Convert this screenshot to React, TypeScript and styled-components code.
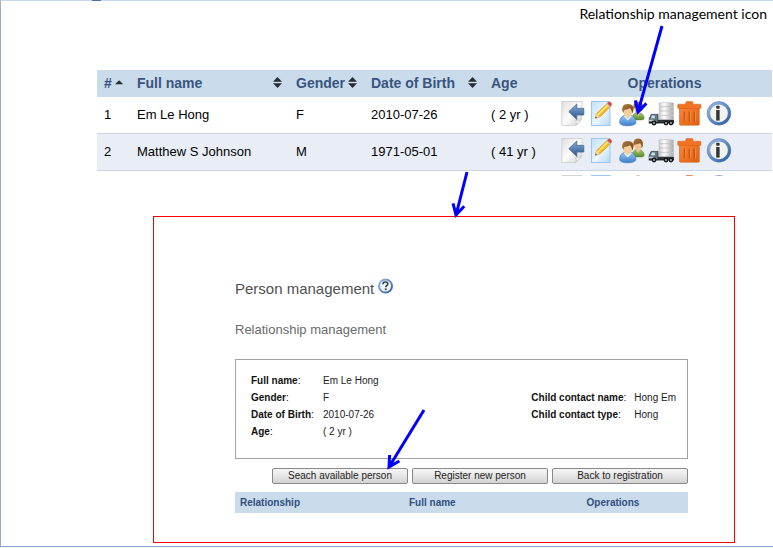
import React from "react";
import styled, { createGlobalStyle } from "styled-components";

const GlobalStyle = createGlobalStyle`
  *, *::before, *::after { box-sizing: border-box; }
  body {
    margin: 0;
    background: #fff;
    color: #000;
    font-family: "Liberation Sans", Arial, sans-serif;
  }
`;

const Page = styled.main`
  position: relative;
  border-top: 1px solid #c5d7ee;
  border-left: 1px solid #a3aab9;
  border-bottom: 1px solid #8ba3c4;
  padding-bottom: 3px;
`;

const TabEdge = styled.div`
  position: absolute;
  top: -1px;
  left: 91px;
  width: 9px;
  height: 1px;
  background: #4a73ab;
`;

const Caption = styled.p`
  margin: 0;
  padding: 3px 6px 0 0;
  text-align: right;
  font-family: Lato, "Open Sans", sans-serif;
  font-size: 14px;
  line-height: 20px;
`;

const ListClip = styled.section`
  margin: 46px 1px 0 96px;
  max-height: 106px;
  overflow: hidden;
`;

const PersonTable = styled.table`
  width: 100%;
  border-collapse: separate;
  border-spacing: 0;
  table-layout: fixed;
`;

const Col = styled.col<{ $w?: number }>`
  width: ${({ $w }) => ($w ? `${$w}px` : "auto")};
`;

const HeadCell = styled.th<{ $center?: boolean }>`
  height: 27px;
  padding: 0 4px 2px 7px;
  background: #cadceb;
  color: #39547f;
  font-size: 14px;
  line-height: 20px;
  text-align: ${({ $center }) => ($center ? "center" : "left")};
  white-space: nowrap;
`;

const SortButton = styled.button<{ $tight?: boolean }>`
  display: flex;
  align-items: center;
  justify-content: ${({ $tight }) => ($tight ? "flex-start" : "space-between")};
  gap: ${({ $tight }) => ($tight ? "3px" : "0")};
  width: 100%;
  padding: 0 3px 0 0;
  border: 0;
  background: none;
  color: inherit;
  font: inherit;
  cursor: pointer;
`;

const Row = styled.tr<{ $alt?: boolean }>`
  background: ${({ $alt }) => ($alt ? "#e9eef6" : "#fff")};
`;

const Cell = styled.td`
  height: 37px;
  padding: 0 0 0 7px;
  border-bottom: 1px solid #c9d3e6;
  font-size: 13px;
  line-height: 16px;
  white-space: nowrap;
`;

const Operations = styled.div`
  display: flex;
  gap: 5px;
  margin-top: -4px;
`;

const IconButton = styled.button`
  width: 24px;
  height: 24px;
  padding: 0;
  border: 0;
  background: none;
  cursor: pointer;

  svg {
    display: block;
    overflow: visible;
  }
`;

const Frame = styled.section`
  position: relative;
  margin: 40px 38px 0 152px;
  padding: 61px 46px 29px 81px;
  border: 1px solid #f00;
`;

const Title = styled.h1`
  display: flex;
  align-items: center;
  gap: 4px;
  margin: 0;
  color: #505050;
  font-size: 15px;
  font-weight: 400;
  line-height: 20px;

  svg {
    display: block;
    margin-bottom: 5px;
  }
`;

const Subtitle = styled.h2`
  margin: 21px 0 0;
  color: #6a6a6a;
  font-size: 13px;
  font-weight: 400;
  line-height: 20px;
`;

const Details = styled.div`
  display: flex;
  justify-content: space-between;
  align-items: flex-start;
  margin-top: 19px;
  padding: 12px 11px 18px 15px;
  border: 1px solid #a2a2a2;
  color: #222;
  font-size: 10px;
  line-height: 17px;
`;

const Facts = styled.dl<{ $label: number; $lower?: boolean }>`
  display: grid;
  grid-template-columns: ${({ $label }) => $label}px auto;
  margin: ${({ $lower }) => ($lower ? "17px" : "0")} 0 0;
`;

const Label = styled.dt`
  color: #111;
`;

const Value = styled.dd`
  margin: 0;
`;

const Actions = styled.div`
  display: flex;
  justify-content: flex-end;
  gap: 4px;
  margin-top: 9px;
`;

const ActionButton = styled.button`
  width: 136px;
  height: 16px;
  padding: 0;
  border: 1px solid #888;
  border-radius: 2px;
  background: linear-gradient(#f6f6f6, #e6e6e6 50%, #d2d2d2);
  color: #222;
  font-family: inherit;
  font-size: 10px;
  line-height: 14px;
  cursor: pointer;
`;

const RelationTable = styled.table`
  width: 100%;
  margin-top: 8px;
  border-collapse: collapse;
  table-layout: fixed;
`;

const RelationHead = styled.th<{ $center?: boolean }>`
  height: 21px;
  padding: 0 5px;
  background: #cadceb;
  color: #2f4f80;
  font-size: 10px;
  line-height: 16px;
  text-align: ${({ $center }) => ($center ? "center" : "left")};
`;

const Pointer = styled.svg<{ $x: number; $y: number }>`
  position: absolute;
  left: ${({ $x }) => $x}px;
  top: ${({ $y }) => $y}px;
  overflow: visible;
  pointer-events: none;
`;

function Arrow({ x, y, dx, dy }: { x: number; y: number; dx: number; dy: number }) {
  const angle = Math.atan2(dy, dx);
  const barb = (turn: number, length: number) =>
    `${dx - length * Math.cos(angle + turn)} ${dy - length * Math.sin(angle + turn)}`;
  return (
    <Pointer $x={x} $y={y} width={1} height={1} aria-hidden="true">
      <path
        d={`M0 0L${barb(0, 3)}M${barb(0.5, 12)}L${dx} ${dy}L${barb(-0.5, 12)}`}
        fill="none"
        stroke="#00f"
        strokeWidth="3"
      />
      <path d={`M${barb(0.5, 7)}L${dx} ${dy}L${barb(-0.5, 7)}z`} fill="#00f" />
    </Pointer>
  );
}

const SortBoth = () => (
  <svg width="9" height="11" viewBox="0 0 9 11" aria-hidden="true">
    <path d="M4.5 0L9 4.7H0zM0 6.3h9L4.5 11z" fill="#262e34" />
  </svg>
);

const SortUp = () => (
  <svg width="9" height="5" viewBox="0 0 9 5" aria-hidden="true">
    <path d="M4.5 0L9 4.4H0z" fill="#262e34" />
  </svg>
);

const DefsHolder = styled.svg`
  position: absolute;
`;

const Defs = () => (
  <DefsHolder width="0" height="0" aria-hidden="true">
    <defs>
      <linearGradient id="paper" x1="0" y1="0" x2="1" y2="1">
        <stop offset="0" stopColor="#dedede" />
        <stop offset=".5" stopColor="#fdfdfd" />
        <stop offset="1" stopColor="#cfcfcf" />
      </linearGradient>
      <linearGradient id="bluePaper" x1="0" y1="0" x2="1" y2="1">
        <stop offset="0" stopColor="#c2e0f8" />
        <stop offset=".55" stopColor="#e9f6ff" />
        <stop offset="1" stopColor="#b4d8f4" />
      </linearGradient>
      <linearGradient id="steel" x1="0" y1="0" x2="0" y2="1">
        <stop offset="0" stopColor="#87acd6" />
        <stop offset="1" stopColor="#2c5588" />
      </linearGradient>
      <linearGradient id="shirt" x1="0" y1="0" x2="0" y2="1">
        <stop offset="0" stopColor="#9cc9f5" />
        <stop offset="1" stopColor="#3b7ecb" />
      </linearGradient>
      <linearGradient id="greenShirt" x1="0" y1="0" x2="0" y2="1">
        <stop offset="0" stopColor="#a4c76b" />
        <stop offset="1" stopColor="#5b8c2b" />
      </linearGradient>
      <linearGradient id="hair" x1="0" y1="0" x2="1" y2="1">
        <stop offset="0" stopColor="#b07c42" />
        <stop offset="1" stopColor="#704313" />
      </linearGradient>
      <linearGradient id="disk" x1="0" y1="0" x2="1" y2="0">
        <stop offset="0" stopColor="#c9c9c9" />
        <stop offset=".35" stopColor="#fff" />
        <stop offset="1" stopColor="#a8a8a8" />
      </linearGradient>
      <linearGradient id="bin" x1="0" y1="0" x2="1" y2="1">
        <stop offset="0" stopColor="#fa8536" />
        <stop offset="1" stopColor="#e0600f" />
      </linearGradient>
      <linearGradient id="ring" x1="0" y1="0" x2="1" y2="1">
        <stop offset="0" stopColor="#9dbbe0" />
        <stop offset="1" stopColor="#2d5ca3" />
      </linearGradient>
    </defs>
  </DefsHolder>
);

const OpenIcon = () => (
  <svg width="24" height="25" viewBox="0 0 24 25" aria-hidden="true">
    <path d="M.8.5h20.4l-.7 18-5.5 6H.8z" fill="url(#paper)" stroke="#cdcdcd" strokeWidth=".8" />
    <path d="M15 24.3c.7-2 .3-4-.3-5.2 2 .7 4 .3 5.8-.6z" fill="#f8f8f8" stroke="#bbb" strokeWidth=".6" />
    <path d="M7.8 10.7L15.8 3v4.4h7v6.6h-7v4.4z" fill="url(#steel)" stroke="#416996" strokeWidth=".8" />
  </svg>
);

const EditIcon = () => (
  <svg width="24" height="25" viewBox="0 0 24 25" aria-hidden="true">
    <rect x="1.5" y=".5" width="18.5" height="24" fill="url(#bluePaper)" stroke="#9cc6e8" />
    <path d="M5.3 17.3l1.2-4.6L17.2 2.2l3.3 3.3L9.8 16z" fill="#f6b91c" stroke="#d08a12" strokeWidth=".6" />
    <path d="M7.2 13.2L17.4 3.2l1.2 1.2L8.4 14.4z" fill="#ffe77c" />
    <path d="M5.3 17.3l1.2-4.6L9.8 16z" fill="#f1d9ae" />
    <path d="M5.3 17.3l.5-1.8 1.3 1.3z" fill="#333" />
    <path d="M16.2 3.2l1-1 3.3 3.3-1 1z" fill="#c4c9d0" />
    <path d="M17.2 2.2c.8-1 2.2-1.6 3.6-.7 1.5 1.1 1.4 2.9-.3 4z" fill="#e24136" />
  </svg>
);

const PeopleIcon = () => (
  <svg width="26" height="25" viewBox="0 0 26 25" aria-hidden="true">
    <path d="M13.5 16.5c.3-4 2.7-5 5.4-5s5.7 1.4 6.3 5.4c.2 1.5-1.4 2-4 2h-6z" fill="url(#greenShirt)" stroke="#587f30" strokeWidth=".5" />
    <path d="M17.2 11.2l2 4 2.3-4z" fill="#f1c89a" />
    <ellipse cx="19" cy="7.7" rx="3.7" ry="4.6" fill="#f1c491" />
    <path d="M14.6 8.5C13.5 2.7 15.8.4 19 .4c3.8 0 5.6 3 4.6 8.4l-1 1.7c.1-2.5-.4-4.2-1.5-5.4-1.8 1.4-4.4 1.4-5.6 1.7z" fill="url(#hair)" />
    <path d="M.7 21.6C.6 16.4 3.7 14 8.7 14c5.2 0 8.3 2.5 8.2 7.6 0 2-3.5 3.2-8.2 3.2S.7 23.6.7 21.6z" fill="url(#shirt)" stroke="#3b72b4" strokeWidth=".6" />
    <path d="M5.6 14.3l3.2 4.6 3.2-4.6z" fill="#f5cfa0" />
    <path d="M5.5 14.2l-.5 1.4 3.6 3.8 4-3.8-.5-1.4-3.4 3.6z" fill="#e6f1fc" />
    <ellipse cx="8.7" cy="10.5" rx="4.4" ry="5.3" fill="#f7cd9c" />
    <path d="M3.7 10.7C2.2 5.7 4.6 3 8.8 3c4.6 0 6.8 2.9 5.2 7.9l-.9 1.5c-.1-2.3-.7-4.1-2.3-5.2-2 1.5-4.3 1-5.7 2-.4.4-.5 1.6-.6 2.9z" fill="url(#hair)" />
  </svg>
);

const TruckIcon = () => (
  <svg width="27" height="25" viewBox="0 0 27 25" aria-hidden="true">
    {[2, 6.3, 10.6, 14.9].map((y) => (
      <path
        key={y}
        d={`M11 ${y}q7-1.2 14.5 0v3.4q-7.5 1.2-14.5 0z`}
        fill="url(#disk)"
        stroke="#b4b4b4"
        strokeWidth=".5"
      />
    ))}
    <path d="M10 18.8h16v3H10z" fill="#30343a" />
    <path d="M1.2 21.8v-4.2l2-4.2H10v8.4z" fill="#627781" stroke="#26303a" strokeWidth=".7" />
    <path d="M2.8 17.2l1.2-2.7h2.8v2.7z" fill="#cfe3ed" />
    <path d="M1 19.3h4.5" stroke="#dedede" />
    <path d="M.8 21.8H26" stroke="#151719" strokeWidth="1.2" />
    {[6, 18, 23].map((x) => (
      <g key={x}>
        <circle cx={x} cy="22" r="2.4" fill="#181a1c" />
        <circle cx={x} cy="22" r=".9" fill="#b8bbc0" />
      </g>
    ))}
  </svg>
);

const BinIcon = () => (
  <svg width="25" height="25" viewBox="0 0 25 25" aria-hidden="true">
    <path d="M2.5 7h19.8v16.3q0 .9-1 .9H3.5q-1 0-1-.9z" fill="url(#bin)" stroke="#cc6222" strokeWidth=".6" />
    <path d="M8.3 3.2l.9-2.6h6.3l.9 2.6h6.7q.8 0 .8.8v2.8q0 .8-.8.8H1.5q-.8 0-.8-.8V4q0-.8.8-.8z" fill="#f27325" stroke="#d66017" strokeWidth=".5" />
    <path d="M7.5 10.5v10M12.4 10.5v10M17.3 10.5v10" stroke="#c9560f" strokeWidth="1.5" />
    <path d="M8.7 10.5v10M13.6 10.5v10M18.5 10.5v10" stroke="#fb9550" strokeWidth=".7" />
  </svg>
);

const InfoIcon = () => (
  <svg width="25" height="25" viewBox="0 0 25 25" aria-hidden="true">
    <circle cx="13" cy="12.3" r="10.4" fill="#f2f2f0" stroke="url(#ring)" strokeWidth="3" />
    <circle cx="13" cy="12.3" r="11.8" fill="none" stroke="#4b73ab" strokeWidth=".5" />
    <rect x="10.2" y="4.8" width="3.4" height="2.9" rx=".6" fill="#303536" />
    <path d="M10.2 9h3.4v10.6h-3.4z" fill="#303536" />
  </svg>
);

const HelpIcon = () => (
  <svg width="16" height="16" viewBox="0 0 16 16" role="img" aria-label="Help">
    <circle cx="7.5" cy="8" r="6.5" fill="#f3f5f8" stroke="url(#ring)" strokeWidth="2" />
    <path d="M5 6.2C5 4.7 6 4 7.4 4s2.4.8 2.4 2c0 1.7-2.1 1.6-2.1 3.3" fill="none" stroke="#344" strokeWidth="1.6" />
    <rect x="6.8" y="10.4" width="1.8" height="1.8" fill="#344" />
  </svg>
);

const operations = [
  { label: "Go to registration", Icon: OpenIcon },
  { label: "Edit profile", Icon: EditIcon },
  { label: "Relationship management", Icon: PeopleIcon },
  { label: "Change location", Icon: TruckIcon },
  { label: "Remove", Icon: BinIcon },
  { label: "Details", Icon: InfoIcon },
];

const people = [
  { name: "Em Le Hong", gender: "F", birth: "2010-07-26", age: "( 2 yr )" },
  { name: "Matthew S Johnson", gender: "M", birth: "1971-05-01", age: "( 41 yr )" },
];

const OperationIcons = () => (
  <Operations>
    {operations.map(({ label, Icon }) => (
      <IconButton key={label} type="button" aria-label={label}>
        <Icon />
      </IconButton>
    ))}
  </Operations>
);

const facts = [
  ["Full name", "Em Le Hong"],
  ["Gender", "F"],
  ["Date of Birth", "2010-07-26"],
  ["Age", "( 2 yr )"],
];

const contacts = [
  ["Child contact name", "Hong Em"],
  ["Child contact type", "Hong"],
];

function FactList({ items, label, lower }: { items: string[][]; label: number; lower?: boolean }) {
  return (
    <Facts $label={label} $lower={lower}>
      {items.map(([name, value]) => (
        <React.Fragment key={name}>
          <Label>
            <b>{name}</b>:
          </Label>
          <Value>{value}</Value>
        </React.Fragment>
      ))}
    </Facts>
  );
}

export default function App() {
  return (
    <>
      <GlobalStyle />
      <Defs />
      <Page>
        <TabEdge />
        <Caption>Relationship management icon</Caption>
        <ListClip>
          <PersonTable>
            <colgroup>
              <Col $w={33} />
              <Col $w={159} />
              <Col $w={75} />
              <Col $w={120} />
              <Col $w={70} />
              <Col />
            </colgroup>
            <thead>
              <tr>
                <HeadCell>
                  <SortButton type="button" $tight># <SortUp /></SortButton>
                </HeadCell>
                <HeadCell>
                  <SortButton type="button">Full name <SortBoth /></SortButton>
                </HeadCell>
                <HeadCell>
                  <SortButton type="button" $tight>Gender <SortBoth /></SortButton>
                </HeadCell>
                <HeadCell>
                  <SortButton type="button">Date of Birth <SortBoth /></SortButton>
                </HeadCell>
                <HeadCell>Age</HeadCell>
                <HeadCell $center>Operations</HeadCell>
              </tr>
            </thead>
            <tbody>
              {people.map((p, i) => (
                <Row key={p.name} $alt={i % 2 === 1}>
                  <Cell>{i + 1}</Cell>
                  <Cell>{p.name}</Cell>
                  <Cell>{p.gender}</Cell>
                  <Cell>{p.birth}</Cell>
                  <Cell>{p.age}</Cell>
                  <Cell><OperationIcons /></Cell>
                </Row>
              ))}
              <Row>
                <Cell colSpan={5} />
                <Cell><OperationIcons /></Cell>
              </Row>
            </tbody>
          </PersonTable>
        </ListClip>
        <Frame>
          <Title>
            Person management <HelpIcon />
          </Title>
          <Subtitle>Relationship management</Subtitle>
          <Details>
            <FactList items={facts} label={72} />
            <FactList items={contacts} label={103} lower />
          </Details>
          <Actions>
            <ActionButton type="button">Seach available person</ActionButton>
            <ActionButton type="button">Register new person</ActionButton>
            <ActionButton type="button">Back to registration</ActionButton>
          </Actions>
          <RelationTable>
            <colgroup>
              <Col $w={169} />
              <Col $w={134} />
              <Col />
            </colgroup>
            <thead>
              <tr>
                <RelationHead>Relationship</RelationHead>
                <RelationHead>Full name</RelationHead>
                <RelationHead $center>Operations</RelationHead>
              </tr>
            </thead>
          </RelationTable>
        </Frame>
        <Arrow x={661} y={25} dx={-24} dy={86} />
        <Arrow x={466} y={171} dx={-11} dy={43} />
        <Arrow x={423} y={409} dx={-35} dy={57} />
      </Page>
    </>
  );
}
